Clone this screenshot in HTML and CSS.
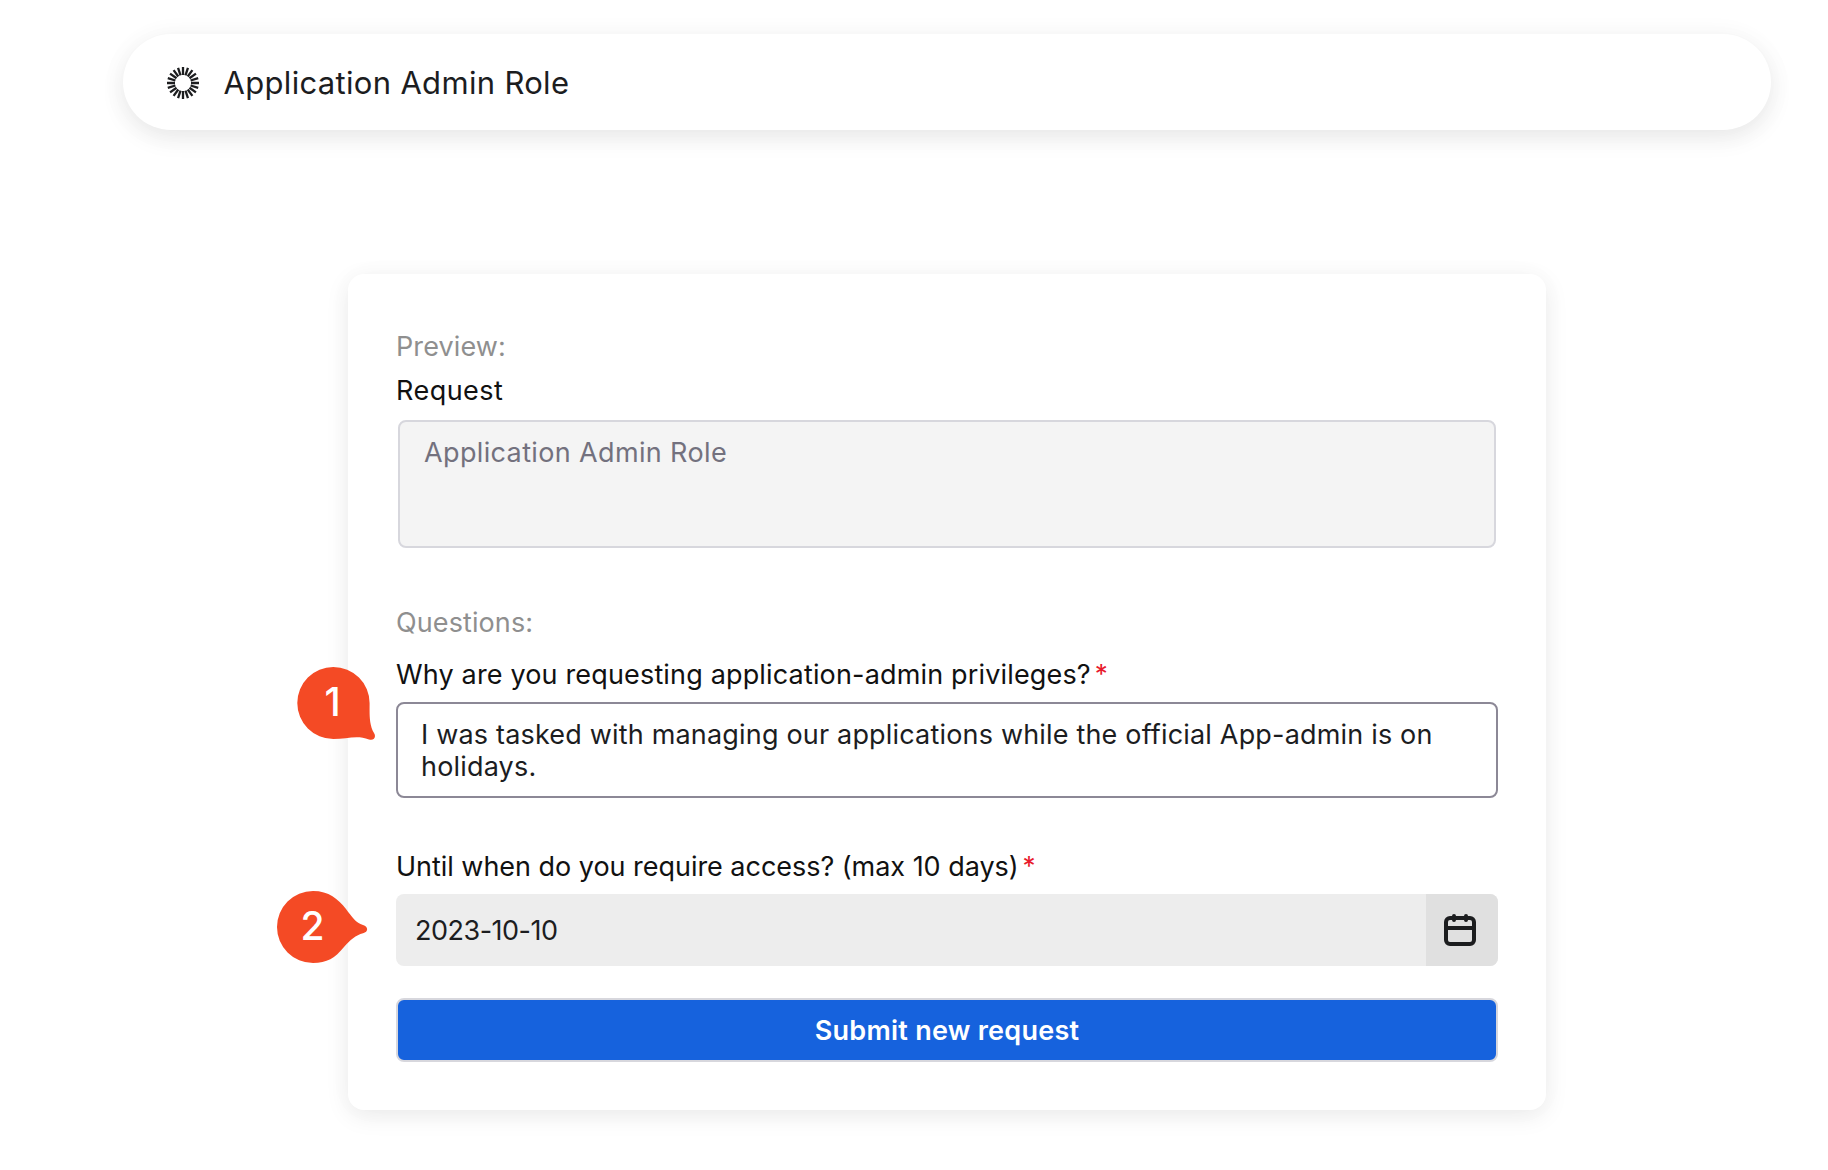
FILE: index.html
```
<!DOCTYPE html>
<html lang="en">
<head>
<meta charset="utf-8">
<title>Application Admin Role</title>
<link rel="stylesheet" href="styles.css">
</head>
<body>
<header class="topbar">
  <svg class="topbar-icon" viewBox="-16 -16 32 32" width="32" height="32" aria-hidden="true">
    <path class="rays" d="M0-8V-16M0 8V16M8 0H16M-8 0H-16M2.470-7.610L4.940-15.200M4.700-6.470L9.400-12.940M6.470-4.700L12.940-9.400M7.610-2.470L15.200-4.940M2.470 7.610L4.940 15.200M4.700 6.470L9.400 12.940M6.470 4.700L12.940 9.400M7.610 2.470L15.200 4.940M-2.470-7.610L-4.940-15.200M-4.700-6.470L-9.400-12.940M-6.470-4.700L-12.940-9.400M-7.610-2.470L-15.200-4.940M-2.470 7.610L-4.940 15.200M-4.700 6.470L-9.400 12.940M-6.470 4.700L-12.940 9.400M-7.610 2.470L-15.200 4.940"/>
  </svg>
  <h1 class="topbar-title">Application Admin Role</h1>
</header>
<main class="card">
  <p class="section-title preview-title">Preview:</p>
  <p class="label request-label">Request</p>
  <div class="field field-readonly">Application Admin Role</div>

  <p class="section-title questions-title">Questions:</p>
  <p class="label reason-label">Why are you requesting application-admin privileges?<span class="required">*</span></p>
  <div class="field field-reason">I was tasked with managing our applications while the official App-admin is on<br>holidays.</div>

  <p class="label until-label">Until when do you require access? (max 10 days)<span class="required">*</span></p>
  <div class="date">
    <span class="date-value">2023-10-10</span>
    <button class="date-button" type="button" aria-label="Open calendar">
      <svg viewBox="0 0 32 32" width="32" height="32" fill="none" stroke="#1c1d1f" stroke-width="4">
        <rect x="2" y="4" width="28" height="26" rx="4"/>
        <path d="M2 14H30"/>
        <path d="M10 2V6M22 2V6" stroke-linecap="round"/>
      </svg>
    </button>
  </div>
  <button class="submit" type="button">Submit new request</button>

  <div class="marker marker-one">
    <svg viewBox="0 0 78 73" width="78" height="73" aria-hidden="true">
      <path d="M36.300 0A36.300 36 0 0 1 72.600 36C72.600 48 72 57 77 66C79.500 70 77 74 72 72.500C60 67.500 50 72 36.300 72A36 36 0 0 1 36.300 0Z"/>
    </svg>
    <span class="marker-number">1</span>
  </div>
  <div class="marker marker-two">
    <svg viewBox="0 0 91 72" width="91" height="72" aria-hidden="true">
      <path d="M36 0C52 0 61 8 69 18C75 26 79 32 86 34C91.500 35.500 91.500 41 86 42.200C79 44 73 49 67 56C58 67 50 72 36 72A36 36 0 0 1 36 0Z"/>
    </svg>
    <span class="marker-number">2</span>
  </div>
</main>
</body>
</html>
```
FILE: styles.css
```
* {
  box-sizing: border-box;
}

body {
  margin: 0;
  padding: 34px 57px 60px 123px;
  background: #fff;
  color: #1c1d1f;
  font: 400 27px/32px Inter, "Liberation Sans", sans-serif;
}

p,
h1 {
  margin: 0;
}

.topbar {
  display: flex;
  align-items: center;
  gap: 24.5px;
  height: 96px;
  padding: 0 44px;
  border-radius: 48px;
  background: #fff;
  box-shadow: 0 8px 24px rgba(0, 0, 0, 0.08), 0 2px 32px rgba(0, 0, 0, 0.03);
}

.topbar-icon {
  margin-top: 2px;
}

.rays {
  fill: none;
  stroke: #1c1d1f;
  stroke-width: 2.3;
}

.topbar-title {
  padding-top: 2px;
  font-size: 31px;
  font-weight: 400;
  line-height: 40px;
  letter-spacing: 0.32px;
}

.card {
  position: relative;
  width: 1198px;
  height: 836px;
  margin: 144px auto 0 225px;
  padding: 57px 48px 48px;
  border-radius: 16px;
  background: #fff;
  box-shadow: 0 6px 24px rgba(0, 0, 0, 0.08), 0 0 32px rgba(0, 0, 0, 0.02);
}

.section-title {
  color: #8f8f8f;
  letter-spacing: 0.1px;
}

.label {
  color: #111;
}

.request-label {
  margin: 12px 0 13px;
  letter-spacing: 0.46px;
}

.field {
  border: 2px solid #8c8896;
  border-radius: 8px;
}

.field-readonly {
  height: 128px;
  margin: 0 2px;
  padding: 15px 24px;
  border-color: #d7d7dd;
  background: #f4f4f4;
  color: #73717e;
  letter-spacing: 0.36px;
}

.questions-title {
  margin-top: 59px;
}

.reason-label {
  margin: 20px 0 11px;
  letter-spacing: 0.16px;
}

.field-reason {
  height: 96px;
  padding: 15px 23px;
  letter-spacing: 0.18px;
}

.until-label {
  margin: 53px 0 11px;
  letter-spacing: -0.03px;
}

.required {
  position: relative;
  top: -1px;
  margin-left: 4px;
  color: #e8192c;
  font-size: 26px;
  line-height: 1;
}

.date {
  display: flex;
  height: 72px;
  border-radius: 8px;
  background: #ededed;
  overflow: hidden;
}

.date-value {
  flex: 1;
  padding: 21px 19px 19px;
  letter-spacing: -0.5px;
}

.date-button {
  display: flex;
  align-items: center;
  width: 72px;
  padding: 0 18px;
  border: 0;
  background: #e0e0e0;
}

.submit {
  display: block;
  width: 1102px;
  height: 64px;
  margin-top: 32px;
  padding: 2px 0 0;
  border: 2px solid #d7d7dd;
  border-radius: 8px;
  background: #1662dd;
  color: #fff;
  font: inherit;
  font-weight: 600;
  letter-spacing: 0.26px;
}

/* Numbered callouts overlap the left edge of the card. */
.marker {
  position: absolute;
  color: #fff;
}

.marker svg {
  display: block;
  fill: #f44a25;
}

.marker-one {
  left: -51px;
  top: 392.5px;
}

.marker-two {
  left: -71px;
  top: 616.5px;
}

.marker-number {
  position: absolute;
  inset: -1px auto auto 0;
  width: 71px;
  font: 450 39px/72px Inter, "Liberation Sans", sans-serif;
  text-align: center;
}
```
